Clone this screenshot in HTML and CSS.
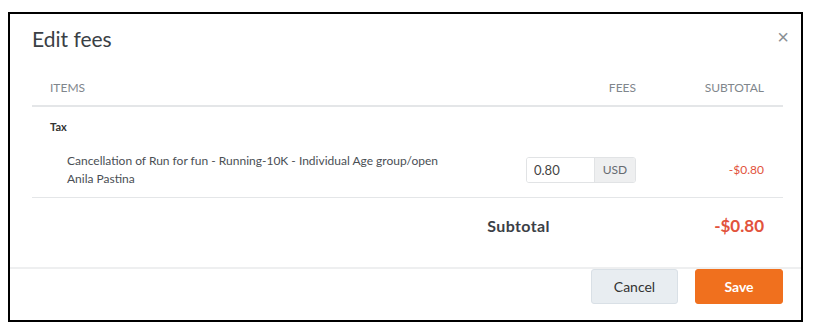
FILE: index.html
```html
<!DOCTYPE html>
<html lang="en">
<head>
  <meta charset="UTF-8" />
  <title>Edit fees</title>
  <link rel="stylesheet" href="styles.css">
</head>
<body>
  <div class="modal">
    <div class="modal-header">
      <h2>Edit fees</h2>
      <button type="button" class="close" aria-label="Close">&times;</button>
    </div>

    <div class="fees-table">
      <div class="row head">
        <span>Items</span>
        <span class="right">Fees</span>
        <span class="right">Subtotal</span>
      </div>

      <div class="group">Tax</div>

      <div class="row item">
        <div class="desc">
          Cancellation of Run for fun - Running-10K - Individual Age group/open<br>
          Anila Pastina
        </div>
        <div class="fee-input">
          <input type="text" value="0.80">
          <span class="addon">USD</span>
        </div>
        <span class="right amount">-$0.80</span>
      </div>

      <div class="total">
        <span class="total-label">Subtotal</span>
        <span class="total-value">-$0.80</span>
      </div>
    </div>

    <div class="modal-footer">
      <button type="button" class="btn btn-cancel">Cancel</button>
      <button type="button" class="btn btn-save">Save</button>
    </div>
  </div>
</body>
</html>
```

FILE: styles.css
```css
body {
  margin: 12px 0 0 8px;
  font-family: Lato, "Open Sans", sans-serif;
  color: #3b4046;
  background: #fff;
}
.modal {
  width: 791px;
  border: 2px solid #000;
  background: #fff;
}
.modal-header {
  position: relative;
  padding: 13px 22px 0;
}
.modal-header h2 {
  margin: 0;
  font-size: 21px;
  line-height: 24px;
  font-weight: 400;
  color: #3a3f45;
}
.close {
  position: absolute;
  top: 13px;
  right: 12px;
  border: none;
  background: none;
  padding: 0;
  font-size: 20px;
  line-height: 20px;
  color: #8a8f94;
  cursor: pointer;
  font-family: Arial, sans-serif;
}
.fees-table {
  margin: 0 18px 0 22px;
}
.row {
  display: grid;
  grid-template-columns: 1fr 110px 128px;
  align-items: center;
  padding: 0 19px 0 18px;
}
.right {
  text-align: right;
}
.head {
  height: 36px;
  margin-top: 18px;
  border-bottom: 2px solid #e4e6e8;
  font-size: 12px;
  text-transform: uppercase;
  color: #80868c;
}
.group {
  padding: 13px 18px 9px;
  font-size: 11px;
  line-height: 14px;
  font-weight: 700;
  color: #333;
}
.item {
  padding: 9px 19px 9px 35px;
  border-bottom: 1px solid #e4e6e8;
  font-size: 12px;
  line-height: 18px;
  color: #4a4f55;
}
.fee-input {
  display: flex;
  height: 26px;
  border: 1px solid #e1e3e5;
  border-radius: 3px;
  box-sizing: border-box;
  overflow: hidden;
}
.fee-input input {
  box-sizing: border-box;
  width: 67px;
  border: none;
  padding: 0 7px;
  font-family: inherit;
  font-size: 13px;
  color: #444;
  outline: none;
}
.fee-input .addon {
  flex: 1;
  background: #eeeff0;
  border-left: 1px solid #e1e3e5;
  font-size: 12px;
  line-height: 24px;
  text-align: center;
  color: #666b70;
}
.amount {
  color: #e2533c;
}
.total {
  display: flex;
  justify-content: flex-end;
  padding: 18px 19px 31px 0;
  line-height: 20px;
}
.total-label {
  font-size: 16px;
  letter-spacing: 0.4px;
  font-weight: 700;
  color: #3b4046;
}
.total-value {
  width: 214px;
  text-align: right;
  font-size: 17px;
  font-weight: 700;
  color: #e2533c;
}
.modal-footer {
  display: flex;
  justify-content: flex-end;
  gap: 17px;
  border-top: 2px solid #eeeff0;
  padding: 0 18px 16px;
}
.btn {
  height: 35px;
  width: 87px;
  border-radius: 3px;
  font-family: inherit;
  font-size: 14px;
  cursor: pointer;
}
.btn-cancel {
  background: #e8edf1;
  border: 1px solid #d9e0e6;
  color: #333;
}
.btn-save {
  width: 88px;
  background: #f0701e;
  border: 1px solid #f0701e;
  color: #fff;
  font-weight: 700;
}
```
